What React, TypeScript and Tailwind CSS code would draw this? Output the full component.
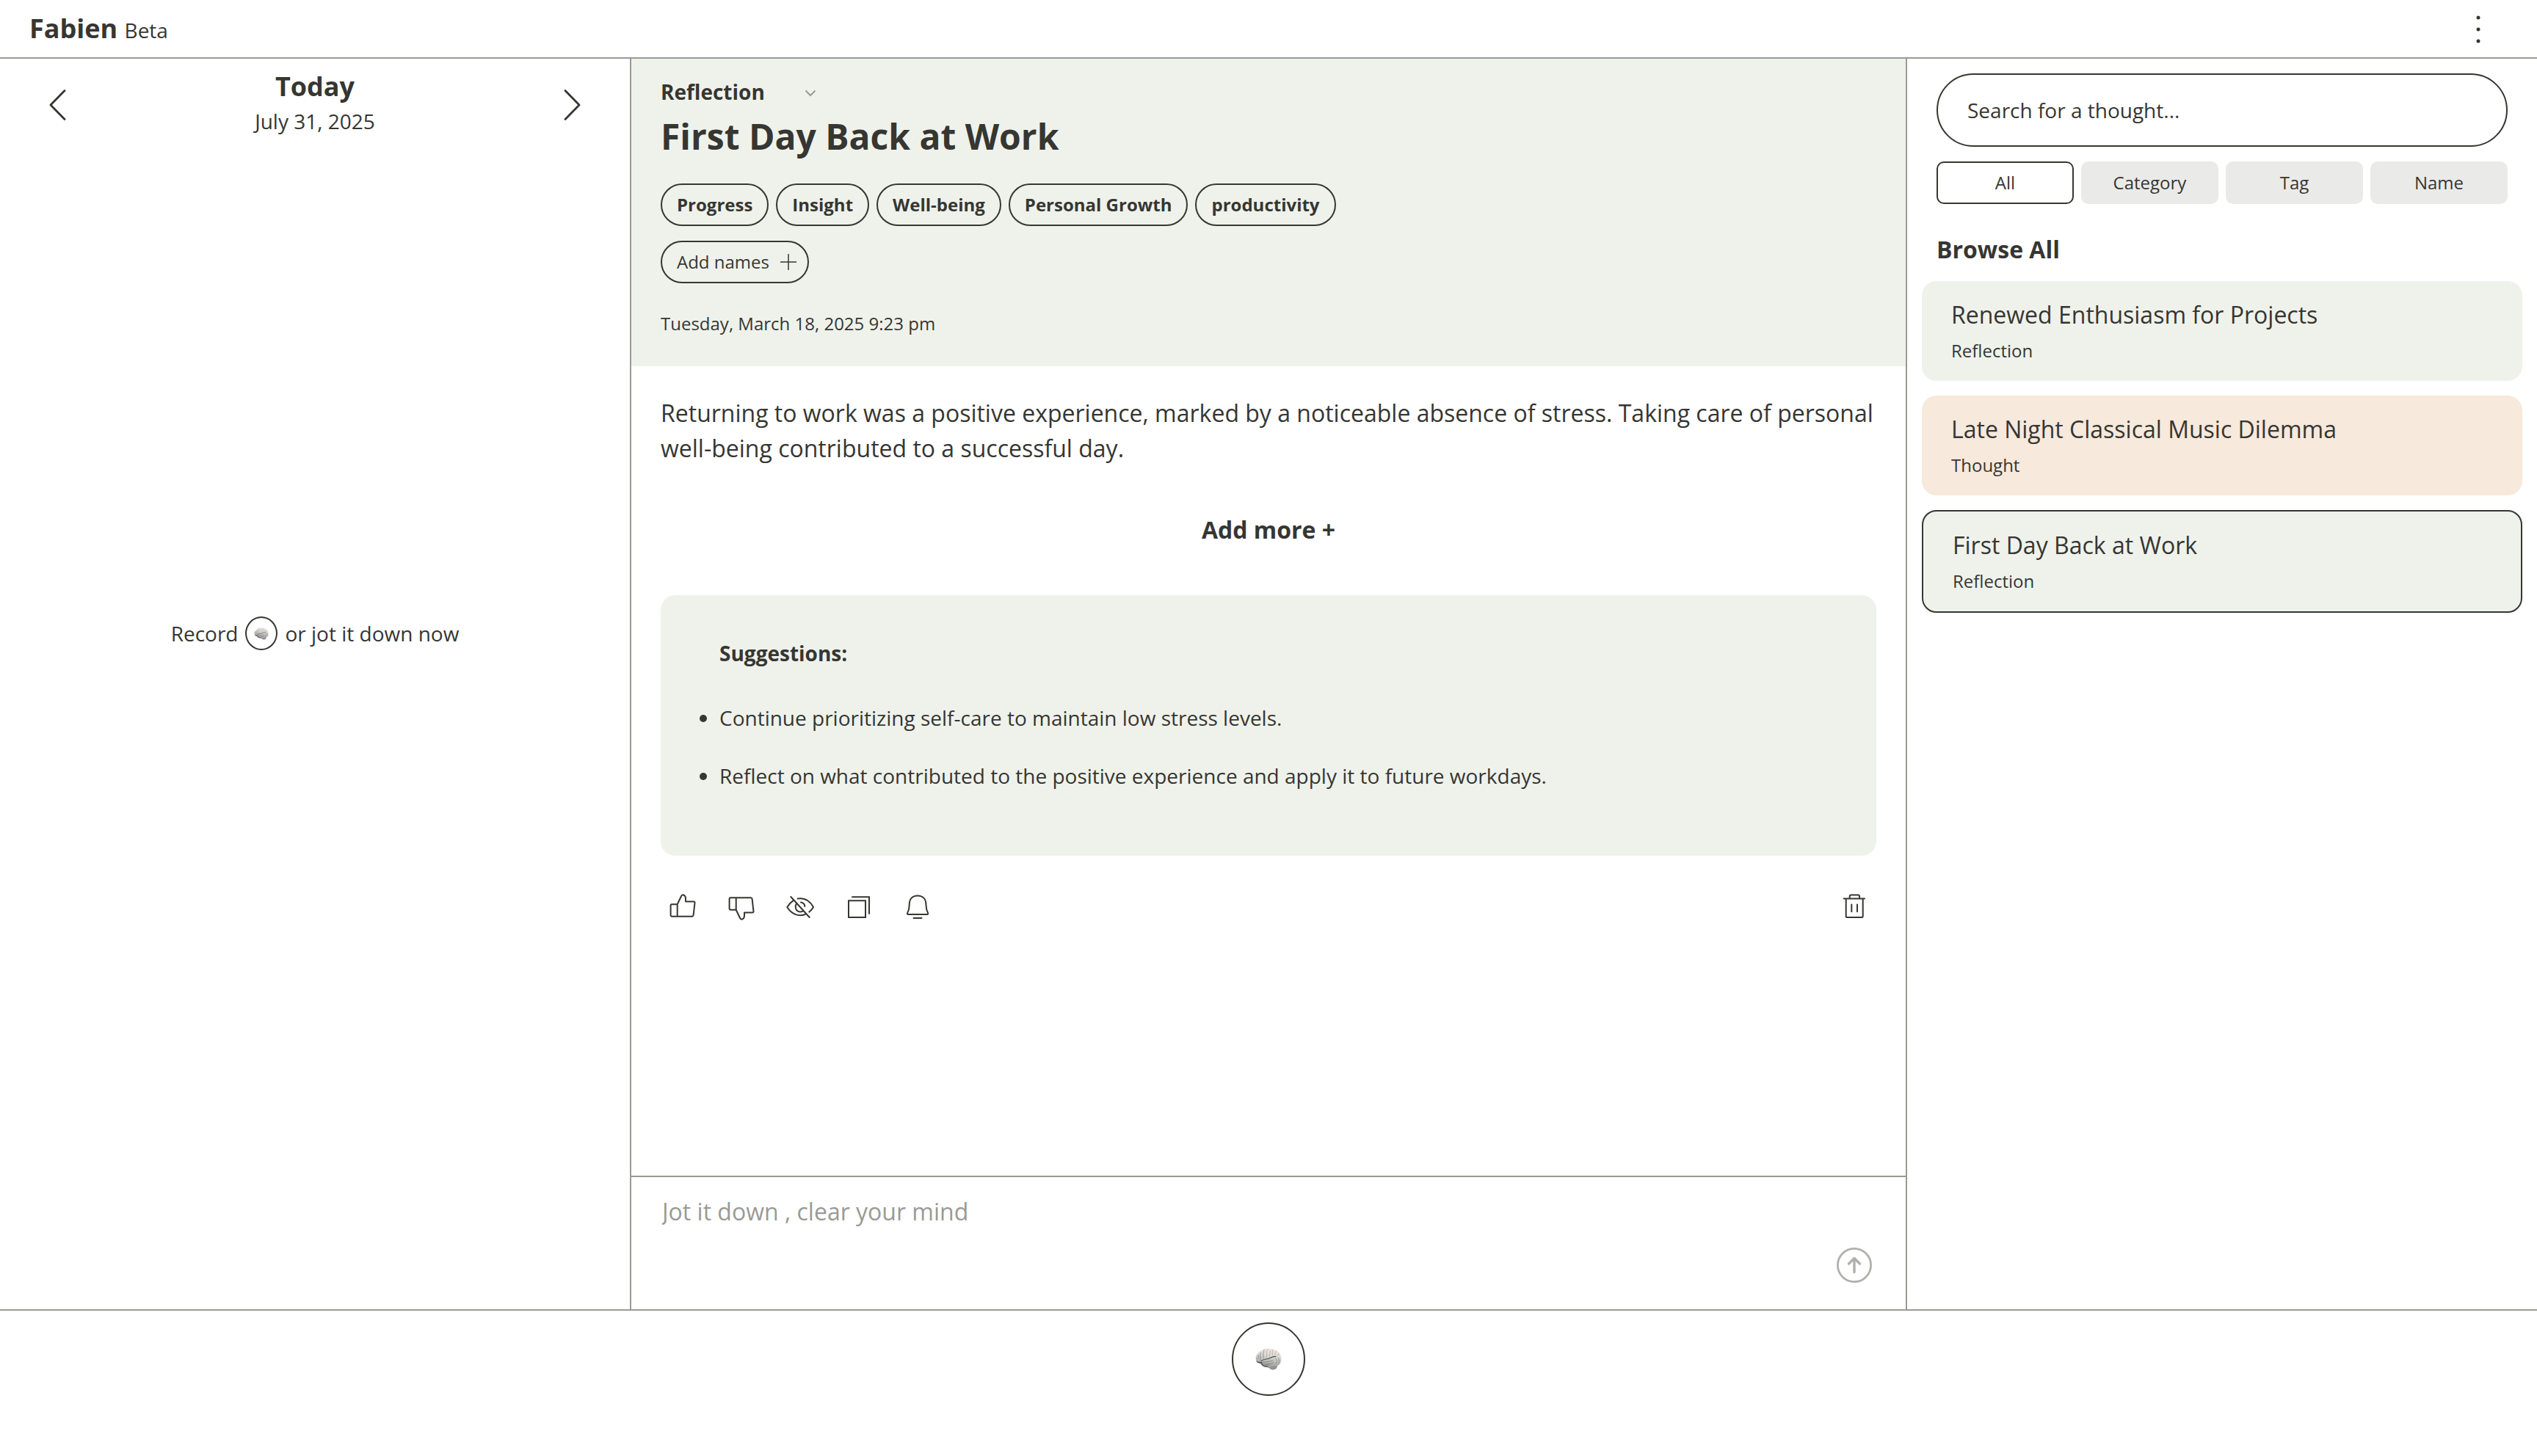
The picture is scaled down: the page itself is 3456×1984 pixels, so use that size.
import React from "react";

const tags = ["Progress", "Insight", "Well-being", "Personal Growth", "productivity"];
const filters = ["All", "Category", "Tag", "Name"];
const entries = [
  { title: "Renewed Enthusiasm for Projects", kind: "Reflection", look: "bg-[#eff2eb]" },
  { title: "Late Night Classical Music Dilemma", kind: "Thought", look: "bg-[#f7e9dc]" },
  { title: "First Day Back at Work", kind: "Reflection", look: "bg-[#eff2eb] border-2 border-[#363632]" },
];
const suggestions = [
  "Continue prioritizing self-care to maintain low stress levels.",
  "Reflect on what contributed to the positive experience and apply it to future workdays.",
];

function Brain({ id, className }: { id: string; className: string }) {
  return (
    <svg viewBox="0 0 36 30" className={className} aria-hidden="true">
      <defs>
        <linearGradient id={id} x1="0.6" y1="0" x2="0.35" y2="1">
          <stop offset="0" stopColor="#f3e6dc" />
          <stop offset="0.4" stopColor="#d8d8d6" />
          <stop offset="0.75" stopColor="#b2b2b0" />
          <stop offset="1" stopColor="#7a7a78" />
        </linearGradient>
      </defs>
      <path d="M1 16C-.5 11 3 6 7 4C11 0 18 0 22 1C28 1 33 5 34.500 10C37 15 35 21 32 23C30 25 26 24 23 25C18 27 10 25.500 8 22C7 20 6 20 4 19.500C2 19 1 18 1 16Z" fill={`url(#${id})`} />
      <path d="M17.500 25C20 22.500 26 22 30 24C30 27.500 27 30 24 29.700C21 29.500 19 27 17.500 25Z" fill="#a8a8a6" />
      <path d="M1.300 17.500C4 19 7 18.500 9 19C9 22 11 24.500 17 25.200L24 29.500C20 28 18 26 16 26C12 25.800 9 24.500 7.500 21C4 20.500 2 19.800 1.300 17.500Z" fill="#555553" />
      <g fill="none" stroke="#7d7d7b" strokeWidth="0.8" strokeLinecap="round">
        <path d="M8 17.500C12 14 16 16 20 13.500C23 12 25 11 28 11.500" stroke="#4c4c4a" strokeWidth="1.100" />
        <path d="M9.500 19.500C14 18 18 19.500 24 16.500M14 22.500C18 21 21 22 25 19.500M27 13.500C30 15 30 18 28 21M31 13C33 15 33 19 31.500 21" />
        <path d="M2.500 14C5 14 5 11 4 9.500M6.500 15.500C8 12 6 10 7.500 6.500M11 13.500C12 11 9.500 9 11.500 5.500C12 4 11 3.500 12 2.500" />
      </g>
      <g fill="none" stroke="#b0a8a1" strokeWidth="0.8" strokeLinecap="round">
        <path d="M15.500 13C14 10 17 8 15.500 5.500C15 4 17 3 17 1.500M19.500 11.500C18 9 21 7 20.500 3.500M23.500 9.500C22 7.500 24.500 5.500 23.500 3M27 9C26 7 28.500 6.500 28 4.500M30 10.500C30.500 9 32.500 9.500 32 7.500" />
        <path d="M20.500 26.500C23 25.500 27 25.500 29.300 25.500M22 28C24 27.300 26 27.500 28 27.300" stroke="#747472" />
      </g>
    </svg>
  );
}

function Glyph({ children }: { children: React.ReactNode }) {
  return (
    <svg viewBox="0 0 40 40" className="size-10" fill="none" stroke="currentColor" strokeWidth="2" strokeLinecap="round" strokeLinejoin="round" aria-hidden="true">
      {children}
    </svg>
  );
}

function IconButton({ label, children }: { label: string; children: React.ReactNode }) {
  return (
    <button type="button" aria-label={label} className="flex size-[60px] items-center justify-center">
      <Glyph>{children}</Glyph>
    </button>
  );
}

function Arrow({ d }: { d: string }) {
  return (
    <svg viewBox="0 0 24 42" className="h-[42px] w-6" fill="none" stroke="currentColor" strokeWidth="2.800" strokeLinecap="round" strokeLinejoin="round" aria-hidden="true">
      <path d={d} />
    </svg>
  );
}

export default function App() {
  return (
    <div className="flex min-h-screen flex-col bg-white font-['Open_Sans',sans-serif] text-[28px] leading-[38px] text-[#363632]">
      <header className="flex h-20 items-center justify-between border-b-2 border-[#9a9a95] px-10">
        <h1 className="pt-0.5 text-[36px] leading-[50px] font-bold">
          Fabien <span className="text-[28px] font-normal">Beta</span>
        </h1>
        <button type="button" aria-label="Menu" className="flex h-[60px] w-20 items-center justify-center">
          <svg viewBox="0 0 40 40" className="size-10" fill="currentColor" aria-hidden="true">
            <circle cx="20" cy="5" r="2.500" />
            <circle cx="20" cy="21" r="2.500" />
            <circle cx="20" cy="37" r="2.500" />
          </svg>
        </button>
      </header>

      <main className="grid flex-1 grid-cols-[860px_1fr_860px]">
        <section className="flex flex-col border-r-2 border-[#9a9a95]">
          <div className="flex items-center justify-between px-[67px] pt-3">
            <button type="button" aria-label="Previous day">
              <Arrow d="M21 1.500L2 21L21 40.500" />
            </button>
            <div className="pb-[10px] text-center">
              <h2 className="text-[36px] leading-[52px] font-bold">Today</h2>
              <p className="mt-0.5">July 31, 2025</p>
            </div>
            <button type="button" aria-label="Next day">
              <Arrow d="M3 1.500L22 21L3 40.500" />
            </button>
          </div>
          <div className="flex flex-1 items-center justify-center gap-[10px] pb-[252px]">
            <span>Record</span>
            <button type="button" aria-label="Record a thought" className="flex h-[46px] w-11 items-center justify-center rounded-[50%] border-2 border-current">
              <Brain id="brain-small" className="h-[17px] w-5" />
            </button>
            <span>or jot it down now</span>
          </div>
        </section>

        <section className="flex min-w-0 flex-col">
          <header className="bg-[#eff2eb] px-10 pt-[26px] pb-[42px]">
            <div className="relative w-[220px]">
              <select aria-label="Category" className="block w-full appearance-none bg-transparent p-0 font-bold">
                <option>Reflection</option>
                <option>Thought</option>
              </select>
              <svg viewBox="0 0 16 10" className="pointer-events-none absolute top-4 right-2 h-[10px] w-4 text-[#9a9a95]" fill="none" stroke="currentColor" strokeWidth="2" aria-hidden="true">
                <path d="M1.500 1.500L8 8L14.500 1.500" />
              </svg>
            </div>
            <h2 className="mt-2 text-[48px] leading-[68px] font-bold">First Day Back at Work</h2>
            <ul className="mt-[30px] flex flex-wrap gap-[10px] text-[24px] leading-[34px] font-bold">
              {tags.map((tag) => (
                <li key={tag} className="rounded-full border-2 border-current px-5 py-[10px]">
                  {tag}
                </li>
              ))}
            </ul>
            <button type="button" className="mt-5 flex items-center gap-[14px] rounded-full border-2 border-current py-[10px] pr-[14px] pl-5 text-[24px] leading-[34px]">
              Add names
              <svg viewBox="0 0 24 24" className="size-6" fill="none" stroke="currentColor" strokeWidth="1.500" aria-hidden="true">
                <path d="M12 1V23M1 12H23" />
              </svg>
            </button>
            <p className="mt-[39px] text-[24px] leading-8">Tuesday, March 18, 2025 9:23 pm</p>
          </header>

          <div className="flex-1 px-10 pt-10">
            <p className="text-[32px] leading-[48px]">
              Returning to work was a positive experience, marked by a noticeable absence of stress. Taking care of personal well-being contributed to a successful day.
            </p>
            <button type="button" className="mx-auto mt-[65px] block text-[32px] leading-[44px] font-bold">
              Add more +
            </button>
            <section className="mt-[67px] rounded-[20px] bg-[#eff2eb] px-20 pt-[60px] pb-[90px]">
              <h3 className="font-bold">Suggestions:</h3>
              <ul className="mt-[50px] flex list-disc flex-col gap-[41px]">
                {suggestions.map((text) => (
                  <li key={text}>{text}</li>
                ))}
              </ul>
            </section>
            <div className="mt-10 flex gap-5">
              <IconButton label="Like">
                <path d="M12.700 16.300V32.700H5Q3.600 32.700 3.600 31.300V17.700Q3.600 16.300 5 16.300H12.700L18 5.200Q18.800 3.300 20.700 3.300Q24 4.500 24 8.500V12.500H35Q36.700 12.500 36.500 14L34.600 31Q34.400 32.700 33 32.700H12.700" />
              </IconButton>
              <IconButton label="Dislike">
                <path d="M12.700 23.700V7.300H5Q3.600 7.300 3.600 8.700V22.300Q3.600 23.700 5 23.700H12.700L18 34.800Q18.800 36.700 20.700 36.700Q24 35.500 24 31.500V27.500H35Q36.700 27.500 36.500 26L34.600 9Q34.400 7.300 33 7.300H12.700" />
              </IconButton>
              <IconButton label="Hide">
                <path d="M7.300 6L32.700 34M16.700 8.600C26 7 33.500 12 38 20C36.500 23 34.500 25 32.300 26.600M11.300 10.700C7 13.500 4.500 16.500 2.300 20C8 29.500 17.500 33.500 26.700 30M14.500 16C12.500 20 14 26 20 26.500C22 26.500 23.500 26 24.500 25M21 13.600C24 14 26 16 26.400 19" />
              </IconButton>
              <IconButton label="Copy">
                <path strokeLinejoin="miter" d="M6 11.300H29V34H6ZM11 6.300H34V29" />
              </IconButton>
              <IconButton label="Remind me">
                <path d="M8.700 17C8.700 9 13 4.400 20 4.400S31.500 9 31.500 17C31.500 22 32 24 34 28Q34.800 30 33 30H7.200Q5.400 30 6.200 28C8.300 24 8.700 22 8.700 17ZM14.500 35H25.500" />
              </IconButton>
              <div className="ml-auto">
                <IconButton label="Delete">
                  <path d="M5.700 8.600H34M13.700 8.300V5.500Q13.700 3.500 15.700 3.500H25Q27 3.500 27 5.500V8.300M8.700 8.600V32.500Q8.700 34 10.200 34H30.200Q31.700 34 31.700 32.500V8.600M16.300 16.500V26.300M24 16.500V26.300" />
                </IconButton>
              </div>
            </div>
          </div>

          <form className="flex items-end border-t-2 border-[#9a9a95] pt-6 pr-[46px] pb-9 pl-[42px]">
            <textarea
              aria-label="New thought"
              placeholder="Jot it down , clear your mind"
              className="h-[120px] min-w-0 flex-1 resize-none bg-transparent text-[32px] leading-[46px] outline-none placeholder:text-[#9a9a95]"
            />
            <button type="button" aria-label="Send" className="text-[#b1b1ac]">
              <svg viewBox="0 0 48 48" className="size-12" fill="none" stroke="currentColor" strokeLinecap="round" strokeLinejoin="round" aria-hidden="true">
                <circle cx="24" cy="24" r="22.600" strokeWidth="2.800" />
                <path strokeWidth="3.400" d="M24 33.500V14.500M16.500 22L24 14.500L31.500 22" />
              </svg>
            </button>
          </form>
        </section>

        <aside className="border-l-2 border-[#9a9a95] pt-5">
          <div className="px-10">
            <input
              type="search"
              aria-label="Search for a thought"
              placeholder="Search for a thought..."
              className="block h-[100px] w-full rounded-full border-2 border-current px-10 outline-none placeholder:text-[#363632]"
            />
            <div className="mt-5 grid grid-cols-4 gap-[10px] text-[24px] leading-[34px]">
              {filters.map((name, i) => (
                <button
                  key={name}
                  type="button"
                  aria-pressed={i === 0}
                  className={
                    i === 0
                      ? "rounded-[10px] border-2 border-current py-[10px]"
                      : "rounded-[10px] border-2 border-[#eaeae8] bg-[#eaeae8] py-[10px]"
                  }
                >
                  {name}
                </button>
              ))}
            </div>
            <h2 className="mt-10 text-[32px] leading-[44px] font-bold">Browse All</h2>
          </div>
          <ul className="mt-[21px] flex flex-col gap-5 px-5">
            {entries.map((entry) => (
              <li key={entry.title}>
                <button type="button" className={`block w-full rounded-[20px] px-10 py-[25px] text-left ${entry.look}`}>
                  <span className="block text-[32px] leading-[42px]">{entry.title}</span>
                  <span className="mt-3 block text-[24px] leading-8">{entry.kind}</span>
                </button>
              </li>
            ))}
          </ul>
        </aside>
      </main>

      <footer className="flex justify-center border-t-2 border-[#9a9a95] pt-4 pb-[82px]">
        <button type="button" aria-label="Start recording" className="flex size-[100px] items-center justify-center rounded-full border-2 border-current">
          <Brain id="brain-large" className="h-[30px] w-9" />
        </button>
      </footer>
    </div>
  );
}
